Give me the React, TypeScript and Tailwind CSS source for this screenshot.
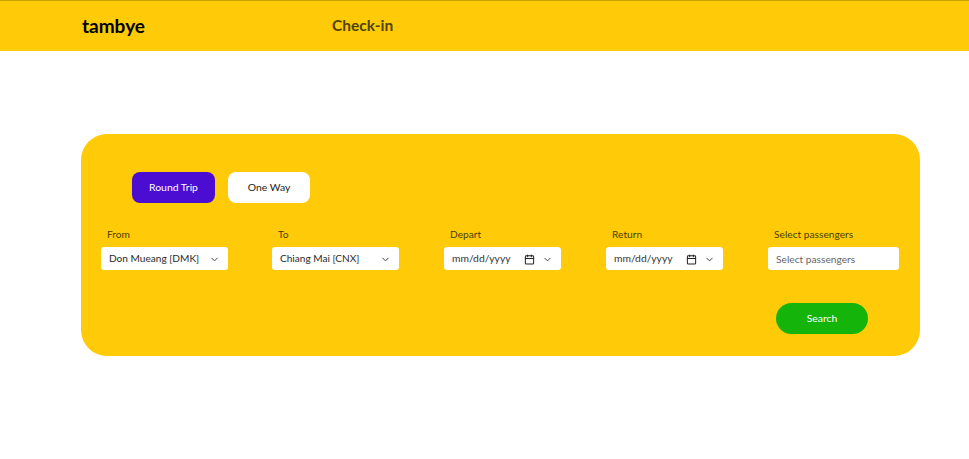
import React from 'react';
import { ChevronDown, Calendar } from 'lucide-react';

const font = { fontFamily: 'Lato, "Open Sans", sans-serif' };

const Field: React.FC<{ label: string; width: string; children: React.ReactNode }> = ({ label, width, children }) => (
  <div className={`flex flex-col ${width}`}>
    <label className="pl-[6px] text-[10.2px] leading-[14px] text-[#4a3f00] mb-[6px]">{label}</label>
    {children}
  </div>
);

const SelectBox: React.FC<{ value: string }> = ({ value }) => (
  <div className="flex items-center justify-between w-[127px] h-[23px] bg-white rounded-[3px] pl-[8px] pr-[8px] pt-[1px] text-[10.1px] text-[#2a2a2a] whitespace-nowrap">
    <span>{value}</span>
    <ChevronDown className="w-[11px] h-[11px] text-[#333]" strokeWidth={2} />
  </div>
);

const DateBox: React.FC = () => (
  <div className="flex items-center w-[117px] h-[23px] bg-white rounded-[3px] pl-[8px] pr-[8px] pt-[1px] text-[10.3px] text-[#333] whitespace-nowrap">
    <span className="flex-1">mm/dd/yyyy</span>
    <Calendar className="w-[11px] h-[11px] text-[#222] mr-[7px]" strokeWidth={2.2} />
    <ChevronDown className="w-[11px] h-[11px] text-[#333]" strokeWidth={2} />
  </div>
);

export default function App() {
  return (
    <div className="w-[969px] h-[459px] bg-white" style={font}>
      {/* Header */}
      <div className="h-[51px] bg-[#ffcb08] border-t border-[#c9a100] flex items-center">
        <span className="ml-[82px] text-[19px] font-bold text-black">tambye</span>
        <span className="ml-[187px] text-[15.5px] font-bold text-[#524300]">Check-in</span>
      </div>

      {/* Booking card */}
      <div className="mx-[81px] mt-[83px] w-[839px] h-[222px] bg-[#ffcb08] rounded-[26px] pt-[38px] pl-[20px]">
        <div className="flex gap-[13px] ml-[31px]">
          <button className="w-[83px] h-[31px] rounded-[8px] bg-[#4b0dd1] text-white text-[10.4px]">Round Trip</button>
          <button className="w-[82px] h-[31px] rounded-[8px] bg-white text-[#222] text-[10.4px]">One Way</button>
        </div>

        <div className="flex mt-[24px]">
          <Field label="From" width="w-[171px]">
            <SelectBox value="Don Mueang [DMK]" />
          </Field>
          <Field label="To" width="w-[172px]">
            <SelectBox value="Chiang Mai [CNX]" />
          </Field>
          <Field label="Depart" width="w-[162px]">
            <DateBox />
          </Field>
          <Field label="Return" width="w-[162px]">
            <DateBox />
          </Field>
          <Field label="Select passengers" width="w-[131px]">
            <input
              placeholder="Select passengers"
              className="w-[131px] h-[23px] bg-white rounded-[3px] px-[8px] pt-[1px] text-[10.2px] text-[#333] placeholder:text-[#666] outline-none"
              style={font}
            />
          </Field>
        </div>

        <div className="flex justify-end mr-[52px] mt-[33px]">
          <button className="w-[92px] h-[31px] rounded-full bg-[#14b40a] text-white text-[10.4px]">Search</button>
        </div>
      </div>
    </div>
  );
}
